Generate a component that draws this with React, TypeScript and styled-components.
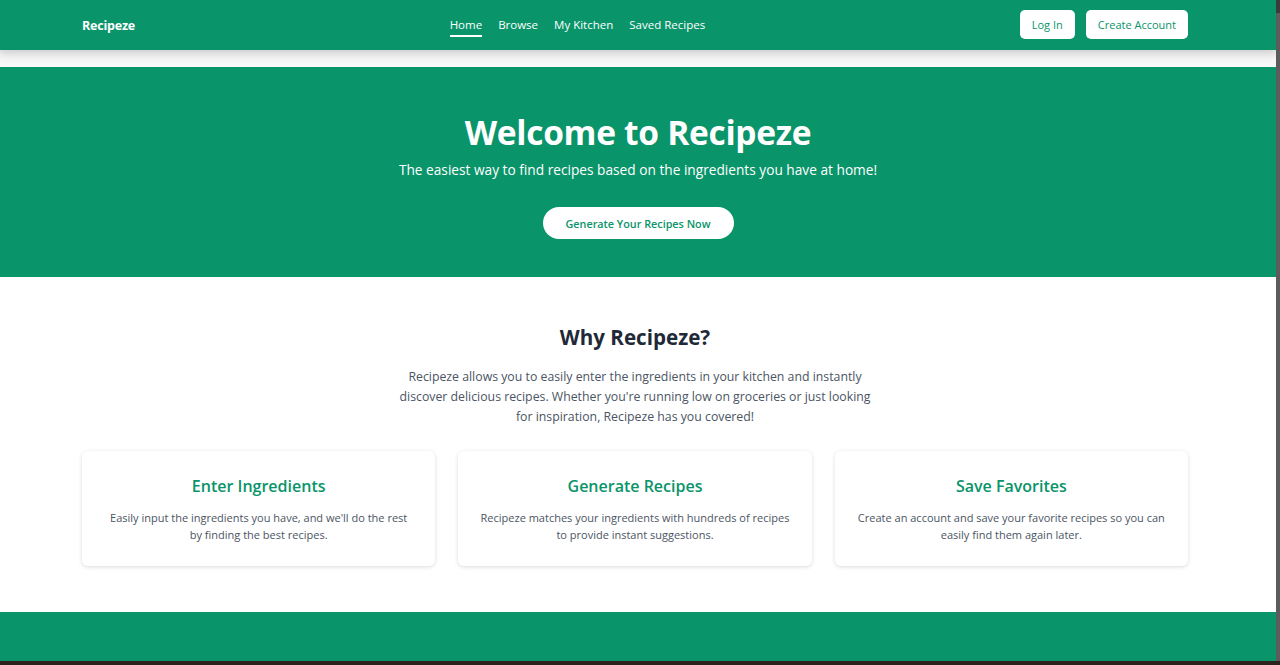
import React from "react";
import styled, { createGlobalStyle } from "styled-components";

const GREEN = "#09946a";

const Global = createGlobalStyle`
  html, body { margin: 0; padding: 0; }
  body {
    background: #2b221e;
    font-family: "Open Sans", "Noto Sans", sans-serif;
    -webkit-font-smoothing: antialiased;
  }
  * { box-sizing: border-box; }
`;

const Frame = styled.div`
  display: grid;
  grid-template-columns: 1fr 4px;
  height: 661px;
  overflow: hidden;
`;

const Scrollbar = styled.div`
  background: linear-gradient(#3b3b3b 0, #3b3b3b 13px, #5c5c5c 13px, #5c5c5c 100%);
`;

const Page = styled.div`
  background: #ffffff;
  display: flex;
  flex-direction: column;
  overflow: hidden;
  & > * { flex-shrink: 0; }
`;

const Nav = styled.header`
  height: 50px;
  background: ${GREEN};
  display: flex;
  justify-content: space-between;
  align-items: center;
  padding: 0 88px 0 82px;
  box-shadow: 0 3px 8px rgba(0, 0, 0, 0.14);
  position: relative;
  z-index: 1;
`;

const Logo = styled.div`
  color: #fff;
  font-weight: 700;
  font-size: 12.5px;
  letter-spacing: -0.2px;
  width: 53px;
`;

const Links = styled.nav`
  display: flex;
  gap: 16px;
  padding-top: 2px;
`;

const NavLink = styled.a<{ $active?: boolean }>`
  color: #fff;
  font-size: 11.5px;
  text-decoration: none;
  padding: 2px 0 3px;
  border-bottom: 2px solid ${(p) => (p.$active ? "#fff" : "transparent")};
`;

const Actions = styled.div`
  display: flex;
  justify-content: flex-end;
  gap: 11px;
  margin-top: -1px;
`;

const NavButton = styled.button`
  background: #fff;
  color: ${GREEN};
  border: none;
  border-radius: 5px;
  height: 29px;
  padding: 0 12px;
  font-family: inherit;
  font-size: 11px;
`;

const Spacer = styled.div`
  height: 17px;
  background: linear-gradient(#eeeeee, #fafafa);
`;

const Hero = styled.section`
  background: ${GREEN};
  height: 210px;
  display: flex;
  flex-direction: column;
  align-items: center;
  color: #fff;
  padding-top: 41px;
`;

const HeroTitle = styled.h1`
  margin: 0;
  font-size: 33.5px;
  font-weight: 700;
  line-height: 48px;
  letter-spacing: -0.3px;
`;

const HeroSub = styled.p`
  margin: 3px 0 0;
  font-size: 13.7px;
  line-height: 22px;
`;

const HeroButton = styled.button`
  margin-top: 26px;
  background: #fff;
  color: ${GREEN};
  border: none;
  border-radius: 999px;
  width: 191px;
  height: 32px;
  font-family: inherit;
  font-weight: 600;
  font-size: 10.8px;
`;

const Why = styled.section`
  padding: 45px 88px 46px 82px;
  display: flex;
  flex-direction: column;
  align-items: center;
`;

const WhyTitle = styled.h2`
  margin: 0;
  font-size: 20.6px;
  line-height: 30px;
  font-weight: 700;
  color: #1f2937;
`;

const WhyText = styled.p`
  margin: 15px 0 0;
  max-width: 480px;
  text-align: center;
  color: #4b5563;
  font-size: 12.3px;
  line-height: 20px;
`;

const Cards = styled.div`
  margin-top: 24px;
  width: 100%;
  display: grid;
  grid-template-columns: repeat(3, 1fr);
  gap: 23px;
`;

const Card = styled.div`
  height: 115px;
  background: #fff;
  border-radius: 6px;
  box-shadow: 0 1px 4px rgba(0, 0, 0, 0.14);
  display: flex;
  flex-direction: column;
  align-items: center;
  padding: 23px 18px 0;
  text-align: center;
`;

const CardTitle = styled.h3`
  margin: 0;
  color: ${GREEN};
  font-size: 16px;
  font-weight: 600;
  line-height: 24px;
`;

const CardText = styled.p`
  margin: 11px 0 0;
  max-width: 310px;
  color: #4b5563;
  font-size: 11px;
  line-height: 17px;
`;

const Footer = styled.footer`
  background: ${GREEN};
  height: 49px;
`;

const features = [
  {
    title: "Enter Ingredients",
    text: "Easily input the ingredients you have, and we'll do the rest by finding the best recipes.",
  },
  {
    title: "Generate Recipes",
    text: "Recipeze matches your ingredients with hundreds of recipes to provide instant suggestions.",
  },
  {
    title: "Save Favorites",
    text: "Create an account and save your favorite recipes so you can easily find them again later.",
  },
];

export default function App() {
  return (
    <>
      <Global />
      <Frame>
        <Page>
          <Nav>
            <Logo>Recipeze</Logo>
            <Links>
              <NavLink $active>Home</NavLink>
              <NavLink>Browse</NavLink>
              <NavLink>My Kitchen</NavLink>
              <NavLink>Saved Recipes</NavLink>
            </Links>
            <Actions>
              <NavButton>Log In</NavButton>
              <NavButton>Create Account</NavButton>
            </Actions>
          </Nav>
          <Spacer />
          <Hero>
            <HeroTitle>Welcome to Recipeze</HeroTitle>
            <HeroSub>The easiest way to find recipes based on the ingredients you have at home!</HeroSub>
            <HeroButton>Generate Your Recipes Now</HeroButton>
          </Hero>
          <Why>
            <WhyTitle>Why Recipeze?</WhyTitle>
            <WhyText>
              Recipeze allows you to easily enter the ingredients in your kitchen and instantly discover
              delicious recipes. Whether you're running low on groceries or just looking for inspiration,
              Recipeze has you covered!
            </WhyText>
            <Cards>
              {features.map((f) => (
                <Card key={f.title}>
                  <CardTitle>{f.title}</CardTitle>
                  <CardText>{f.text}</CardText>
                </Card>
              ))}
            </Cards>
          </Why>
          <Footer />
        </Page>
        <Scrollbar />
      </Frame>
    </>
  );
}
